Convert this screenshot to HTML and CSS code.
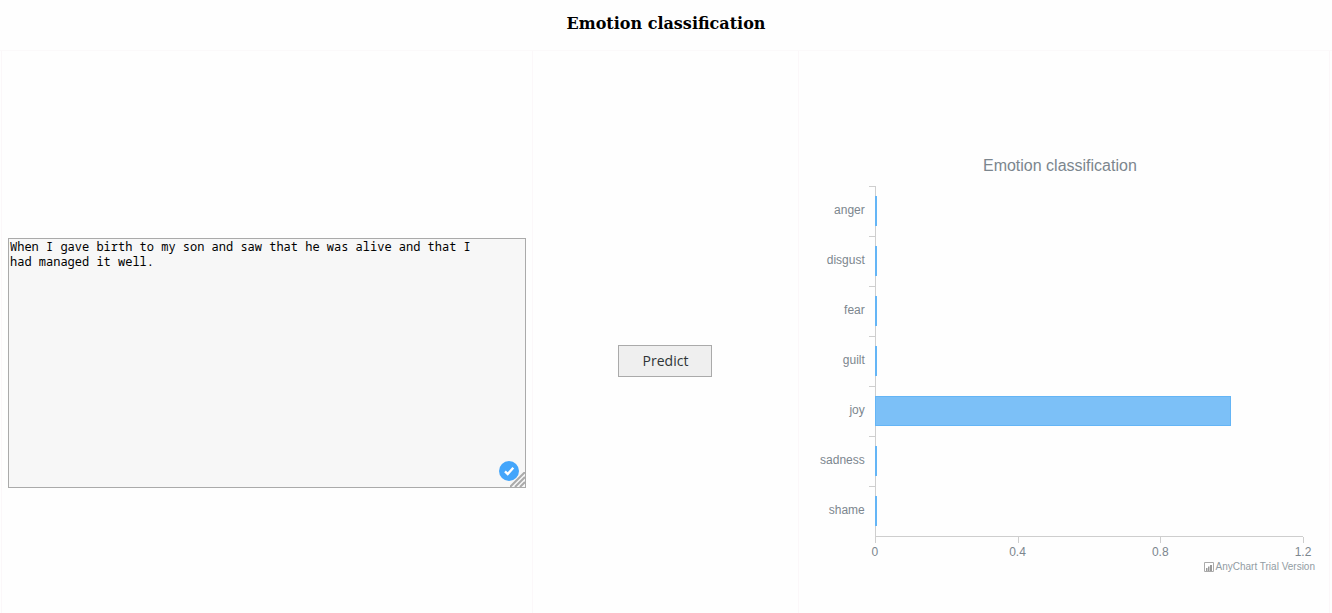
FILE: index.html
```html
<!DOCTYPE html>
<html lang="en">
<head>
<meta charset="utf-8">
<title>Emotion classification</title>
<link rel="stylesheet" href="styles.css">
</head>
<body>
<header class="header"><h1 class="heading">Emotion classification</h1></header>
<main class="columns">
  <section class="column input-column">
    <div class="editor">
      <textarea class="text" aria-label="Text to classify" spellcheck="false">When I gave birth to my son and saw that he was alive and that I had managed it well.</textarea>
      <svg class="check" viewBox="0 0 20 20" aria-hidden="true"><circle cx="10" cy="10" r="10" fill="#43a5fb"/><path d="M6 10.300l2.700 2.700 5.600-6.200" fill="none" stroke="#fff" stroke-width="2.400"/></svg>
      <svg class="grip" viewBox="0 0 15 15" aria-hidden="true"><path d="M0 15L15 0M5 15L15 5M10 15L15 10" stroke="#aaa" stroke-width="2"/></svg>
    </div>
  </section>
  <section class="column action-column">
    <button class="predict" type="button">Predict</button>
  </section>
  <section class="column chart-column">
    <figure class="chart">
      <figcaption class="chart-title">Emotion classification</figcaption>
      <div class="plot">
        <div class="row"><span class="label">anger</span><span class="track"><i class="bar"></i></span></div>
        <div class="row"><span class="label">disgust</span><span class="track"><i class="bar"></i></span></div>
        <div class="row"><span class="label">fear</span><span class="track"><i class="bar"></i></span></div>
        <div class="row"><span class="label">guilt</span><span class="track"><i class="bar"></i></span></div>
        <div class="row"><span class="label">joy</span><span class="track"><i class="bar" style="width:83.2%"></i></span></div>
        <div class="row"><span class="label">sadness</span><span class="track"><i class="bar"></i></span></div>
        <div class="row"><span class="label">shame</span><span class="track"><i class="bar"></i></span></div>
      </div>
      <div class="axis">
        <span class="tick">0</span><span class="tick">0.4</span><span class="tick">0.8</span><span class="tick">1.2</span>
      </div>
      <div class="credits">
        <svg class="credits-icon" viewBox="0 0 10 10" aria-hidden="true"><path d="M.5.5h9v9h-9z" fill="#fff" stroke="#aaa"/><path d="M2 6h1.500v3H2zM4 4.500h1.500v4.500H4zM6 3h2v6H6z" fill="#999"/></svg>
        <span class="credits-text">AnyChart Trial Version</span>
      </div>
    </figure>
  </section>
</main>
</body>
</html>
```
FILE: styles.css
```css
* { box-sizing: border-box; }
body {
  margin: 0;
  min-height: 100vh;
  display: flex;
  flex-direction: column;
  background: #fefefe;
  color: #000;
}
.header {
  height: 51px;
  padding-top: 14px;
  border-bottom: 1px solid #fbf9fa;
  text-align: center;
}
.heading {
  margin: 0;
  font: bold 16px/20px "DejaVu Serif", serif;
}
.columns {
  flex: 1;
  display: grid;
  grid-template-columns: 2fr 1fr 2fr;
  margin: 0 2px 0 1px;
  border-left: 1px solid #fbf7f9;
}
.column {
  display: flex;
  align-items: center;
  justify-content: center;
  min-width: 0;
  border-right: 1px solid #fbf7f9;
}
.input-column { padding: 0 6px; }
.editor {
  position: relative;
  width: 100%;
  height: 250px;
  margin-top: 62px;
}
.text {
  display: block;
  width: 100%;
  height: 100%;
  margin: 0;
  padding: 0 32px 1px 1px;
  border: 1px solid #aaa;
  border-radius: 0;
  background: #f7f7f7;
  color: #000;
  font: 12px/15px "Noto Sans Mono", "Droid Sans Mono", "DejaVu Sans Mono", monospace;
  resize: none;
  outline: none;
}
.check {
  position: absolute;
  right: 7px;
  bottom: 7px;
  width: 20px;
  height: 20px;
}
.grip {
  position: absolute;
  right: 1px;
  bottom: 1px;
  width: 15px;
  height: 15px;
}
.predict {
  min-width: 94px;
  margin-top: 58px;
  padding: 5px 16px;
  border: 1px solid #aaa;
  border-radius: 0;
  background: #efefef;
  color: #2e3436;
  font: 14px/20px "Open Sans", sans-serif;
}
.chart {
  flex: 1;
  margin: 64px 0 0;
  padding: 0 26px 0 12px;
  color: #7c868e;
  font: 12px/16px "Liberation Sans", Arial, sans-serif;
}
.chart-title {
  margin: 0 -6px 10px 0;
  font-size: 16px;
  line-height: 20px;
  text-align: center;
}
.plot { border-bottom: 1px solid #cecece; margin-left: 64px; }
.row {
  display: flex;
  height: 50px;
  margin-left: -64px;
}
.label {
  width: 58px;
  padding: 16px 4px 0 0;
  text-align: right;
}
.track {
  flex: 1;
  display: flex;
  align-items: center;
  background: linear-gradient(#cecece, #cecece) 0 0 / 6px 1px no-repeat;
  padding-left: 6px;
}
.track::before {
  content: "";
  align-self: stretch;
  width: 1px;
  margin-right: -1px;
  background: #cecece;
}
.bar {
  width: 2px;
  height: 30px;
  border: 1px solid #64b5f6;
  background: #7cc0f7;
}
.axis {
  display: grid;
  grid-template-columns: repeat(3, 1fr) 0;
  margin-left: 64px;
}
.tick {
  justify-self: start;
  width: 40px;
  margin-left: -20px;
  padding-top: 7px;
  background: linear-gradient(#cecece, #cecece) 20px 0 / 1px 6px no-repeat;
  text-align: center;
}
.credits {
  display: flex;
  justify-content: flex-end;
  align-items: center;
  gap: 2px;
  margin: 1px -12px 0 0;
  font-size: 10px;
  line-height: 12px;
}
.credits-icon { width: 10px; height: 10px; }
.credits-text { color: #929ca3; }
```
